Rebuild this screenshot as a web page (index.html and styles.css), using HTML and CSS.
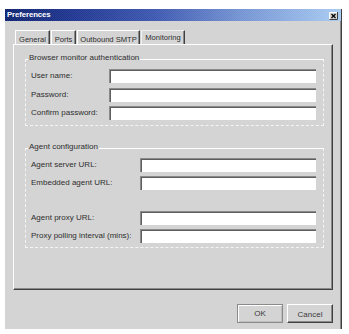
FILE: index.html
```html
<!DOCTYPE html>
<html>
<head>
<meta charset="utf-8">
<link rel="stylesheet" href="styles.css">
</head>
<body>
<div class="dialog">
  <div class="titlebar">
    <span class="title">Preferences</span>
    <span class="close">
      <svg width="9" height="8" viewBox="0 0 9 8">
        <rect x="0" y="0" width="9" height="8" fill="#d4d4d4"/>
        <path d="M0.5 7.5V0.5H8.5" stroke="#fff" stroke-width="1" fill="none"/>
        <path d="M0.5 7.5H8.5V0" stroke="#404040" stroke-width="1" fill="none"/>
        <path d="M2.5 2L6.5 6M6.5 2L2.5 6" stroke="#000" stroke-width="1.3"/>
      </svg>
    </span>
  </div>
  <div class="content">
    <div class="tabs">
      <div class="tab t-general">General</div>
      <div class="tab t-ports">Ports</div>
      <div class="tab t-smtp">Outbound SMTP</div>
      <div class="tab t-mon active">Monitoring</div>
    </div>
    <div class="panel">
      <fieldset class="group auth">
        <legend>Browser monitor authentication</legend>
        <div class="form">
          <label>User name:</label><span class="field"></span>
          <label>Password:</label><span class="field"></span>
          <label>Confirm password:</label><span class="field"></span>
        </div>
      </fieldset>
      <fieldset class="group agent">
        <legend>Agent configuration</legend>
        <div class="form">
          <label>Agent server URL:</label><span class="field"></span>
          <label>Embedded agent URL:</label><span class="field"></span>
          <div class="spacer"></div>
          <label>Agent proxy URL:</label><span class="field"></span>
          <label>Proxy polling interval (mins):</label><span class="field"></span>
        </div>
      </fieldset>
    </div>
    <div class="buttons">
      <div class="btn ok">OK</div>
      <div class="btn cancel"><span>Cancel</span></div>
    </div>
  </div>
</div>
</body>
</html>
```

FILE: styles.css
```css
html, body {
  margin: 0;
  padding: 0;
  background: #ffffff;
}

body {
  font-family: "Liberation Sans", Arial, sans-serif;
  font-size: 8px;
  color: #2e2e2e;
}

.dialog {
  margin: 9px 0 0 5px;
  width: 337px;
  height: 320px;
  box-sizing: border-box;
  background: #d4d4d4;
  border-right: 1px solid #404040;
  box-shadow: inset -1px 0 0 #8a8a8a;
  display: flex;
  flex-direction: column;
}

.titlebar {
  height: 12px;
  display: flex;
  align-items: center;
  justify-content: space-between;
  padding: 0 3px 0 2px;
  background:
    repeating-conic-gradient(rgba(255,255,255,0.07) 0 25%, rgba(0,0,0,0) 0 50%) 0 0 / 2px 2px,
    linear-gradient(to right, #0c2270 0%, #1f3590 20%, #3d58b0 45%, #7393d2 70%, #a8cbf2 100%);
}

.title {
  color: #ffffff;
  font-weight: bold;
  font-size: 7.8px;
  line-height: 12px;
  letter-spacing: -0.1px;
}

.close {
  display: flex;
  height: 8px;
  margin-top: 1px;
}

.content {
  flex: 1;
  padding: 9px 0 0 8px;
  display: flex;
  flex-direction: column;
}

.tabs {
  display: flex;
  height: 14px;
  margin-left: 2px;
  gap: 1px;
}

.tab {
  box-sizing: border-box;
  height: 14px;
  border-top: 1px solid #ffffff;
  border-left: 1px solid #ffffff;
  border-right: 1px solid #404040;
  box-shadow: inset -1px 0 0 #8a8a8a;
  display: flex;
  justify-content: center;
  align-items: center;
  padding-top: 3px;
  white-space: nowrap;
  font-size: 7.6px;
}

.t-general { width: 35px; }
.t-ports { width: 25px; }
.t-smtp { width: 63px; }
.t-mon { width: 44px; }

.tab.active {
  padding-top: 0;
  border-top-color: #f0f0f0;
  border-left-color: #f0f0f0;
  background: #d6d6d6;
}

.panel {
  box-sizing: border-box;
  width: 320px;
  height: 246px;
  border-top: 1px solid #ffffff;
  border-left: 1px solid #ffffff;
  border-right: 1px solid #404040;
  border-bottom: 1px solid #404040;
  box-shadow: inset -1px -1px 0 #8a8a8a;
  padding: 8px 8px 0 11px;
}

.group {
  margin: 0;
  border: 1px dashed #f4f4f4;
  border-top-style: solid;
  border-top-color: #ffffff;
  min-width: 0;
}

.group legend {
  margin-left: -3px;
  padding: 0 1px 2px;
  line-height: 10px;
}

.auth {
  padding: 4px 7px 5px 5px;
}

.agent {
  margin-top: 16px;
  padding: 4px 7px 4px 5px;
}

.form {
  display: grid;
  grid-auto-rows: 14px;
  align-items: center;
}

.auth .form {
  grid-template-columns: 78px 1fr;
  row-gap: 4.5px;
}

.agent .form {
  grid-template-columns: 109px 1fr;
  row-gap: 3.75px;
}

.form label {
  white-space: nowrap;
  line-height: 14px;
}

.field {
  display: block;
  height: 14px;
  box-sizing: border-box;
  background: #ffffff;
  border-top: 1px solid #8a8a8a;
  border-left: 1px solid #8a8a8a;
  box-shadow: inset 1px 1px 0 #5e5e5e;
}

.spacer {
  grid-column: 1 / span 2;
}

.buttons {
  width: 320px;
  margin-top: 14px;
  display: flex;
  justify-content: flex-end;
  gap: 4px;
}

.btn {
  box-sizing: border-box;
  width: 46px;
  height: 19px;
  display: flex;
  align-items: center;
  justify-content: center;
  color: #3a3a3a;
}

.ok {
  border: 1px solid #8a8a8a;
  box-shadow: inset 1px 1px 0 #ffffff, inset -1px -1px 0 #bdbdbd;
}

.cancel {
  border-top: 1px solid #ffffff;
  border-left: 1px solid #ffffff;
  border-right: 1px solid #404040;
  border-bottom: 1px solid #404040;
  box-shadow: inset -1px -1px 0 #8a8a8a;
}

.cancel span {
  padding: 1px 0 0;
}
```
